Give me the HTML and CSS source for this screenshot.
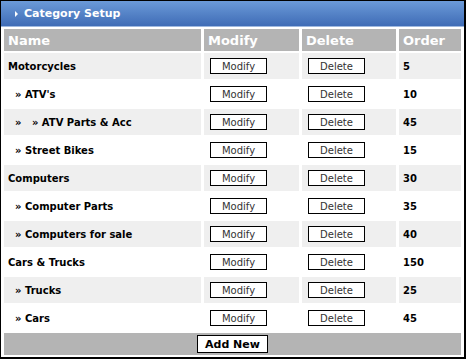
FILE: index.html
```html
<!DOCTYPE html>
<html lang="en">
<head>
<meta charset="UTF-8" />
<title>Category Setup</title>
<link rel="stylesheet" href="styles.css">
</head>
<body>
  <div class="panel">
    <div class="panel-title"><span class="arrow"></span>Category Setup</div>
    <table class="cats">
      <thead>
        <tr>
          <th class="c-name">Name</th>
          <th class="c-mod">Modify</th>
          <th class="c-del">Delete</th>
          <th class="c-ord">Order</th>
        </tr>
      </thead>
      <tbody>
        <tr class="alt">
          <td>Motorcycles</td>
          <td><button class="btn">Modify</button></td>
          <td><button class="btn">Delete</button></td>
          <td>5</td>
        </tr>
        <tr>
          <td class="sub">&raquo; ATV's</td>
          <td><button class="btn">Modify</button></td>
          <td><button class="btn">Delete</button></td>
          <td>10</td>
        </tr>
        <tr class="alt">
          <td class="sub">&raquo; &nbsp;&nbsp;&raquo; ATV Parts &amp; Acc</td>
          <td><button class="btn">Modify</button></td>
          <td><button class="btn">Delete</button></td>
          <td>45</td>
        </tr>
        <tr>
          <td class="sub">&raquo; Street Bikes</td>
          <td><button class="btn">Modify</button></td>
          <td><button class="btn">Delete</button></td>
          <td>15</td>
        </tr>
        <tr class="alt">
          <td>Computers</td>
          <td><button class="btn">Modify</button></td>
          <td><button class="btn">Delete</button></td>
          <td>30</td>
        </tr>
        <tr>
          <td class="sub">&raquo; Computer Parts</td>
          <td><button class="btn">Modify</button></td>
          <td><button class="btn">Delete</button></td>
          <td>35</td>
        </tr>
        <tr class="alt">
          <td class="sub">&raquo; Computers for sale</td>
          <td><button class="btn">Modify</button></td>
          <td><button class="btn">Delete</button></td>
          <td>40</td>
        </tr>
        <tr>
          <td>Cars &amp; Trucks</td>
          <td><button class="btn">Modify</button></td>
          <td><button class="btn">Delete</button></td>
          <td>150</td>
        </tr>
        <tr class="alt">
          <td class="sub">&raquo; Trucks</td>
          <td><button class="btn">Modify</button></td>
          <td><button class="btn">Delete</button></td>
          <td>25</td>
        </tr>
        <tr>
          <td class="sub">&raquo; Cars</td>
          <td><button class="btn">Modify</button></td>
          <td><button class="btn">Delete</button></td>
          <td>45</td>
        </tr>
      </tbody>
      <tfoot>
        <tr>
          <td colspan="4"><button class="btn btn-add">Add New</button></td>
        </tr>
      </tfoot>
    </table>
  </div>
</body>
</html>
```

FILE: styles.css
```css
:root {
  --font: Verdana, "DejaVu Sans", sans-serif;
  --head: #b4b4b4;
  --alt: #efefef;
}

* {
  box-sizing: border-box;
}

html,
body {
  margin: 0;
  padding: 0;
  background: #fff;
  font-family: var(--font);
}

/* ------------ PANEL ------------- */
.panel {
  width: 466px;
  height: 359px;
  border: 1px solid #000;
  border-width: 1px 2px 2px 1px;
}

.panel-title {
  height: 26px;
  padding-left: 14px;
  display: flex;
  align-items: center;
  gap: 6px;
  color: #fff;
  font-size: 11px;
  font-weight: bold;
  background: linear-gradient(#6b9ad8, #3f6cb6);
  border-bottom: 1px solid #9fb9e0;
}
.arrow {
  width: 0;
  height: 0;
  border-left: 3px solid #fff;
  border-top: 3px solid transparent;
  border-bottom: 3px solid transparent;
}

/* ------------ TABLE ------------- */
table.cats {
  width: 100%;
  border-spacing: 3px 2px;
  font-size: 10px;
  font-weight: bold;
}

.cats th {
  height: 22px;
  padding: 0 4px;
  text-align: left;
  color: #fff;
  background: var(--head);
  font-size: 13px;
}
.c-name { width: 197px; }
.c-mod { width: 95px; }
.c-del { width: 94px; }

.cats td {
  height: 26px;
  padding: 0 4px;
  color: #000;
}
.cats tr.alt td { background: var(--alt); }
.cats td.sub { padding-left: 11px; }

.btn {
  width: 57px;
  height: 16px;
  margin-left: 2px;
  padding: 0;
  background: #fff;
  border: 1px solid #000;
  font-family: var(--font);
  font-size: 10px;
  color: #333;
  cursor: pointer;
}

.cats tfoot td {
  height: 22px;
  background: var(--head);
  text-align: center;
  padding: 0;
}
.btn-add {
  width: 71px;
  height: 18px;
  margin: 0;
  font-weight: bold;
  font-size: 11px;
  color: #000;
}
```
